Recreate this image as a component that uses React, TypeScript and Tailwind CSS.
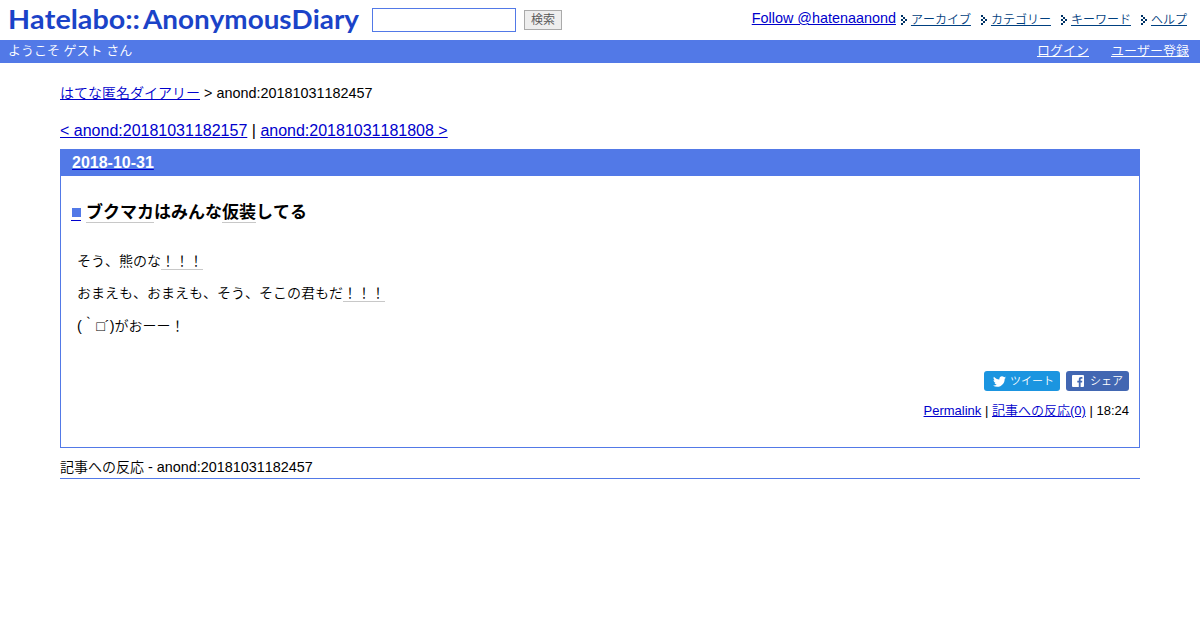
import type { ReactNode } from "react";
import { FaTwitter } from "react-icons/fa";

const menu = ["アーカイブ", "カテゴリー", "キーワード", "ヘルプ"];

function Arrow() {
  return (
    <svg width="6" height="10" viewBox="0 0 6 10" fill="#003366" shapeRendering="crispEdges" className="mr-1 mt-[15px] shrink-0">
      <path d="M0 0h2v2H0zM2 2h2v2H2zM4 4h2v2H4zM2 6h2v2H2zM0 8h2v2H0zM0 4h2v2H0z" />
    </svg>
  );
}

function Keyword({ children }: { children: ReactNode }) {
  return <span className="border-b border-[#c8c8c8]">{children}</span>;
}

function Header() {
  return (
    <header className="flex h-10 items-start">
      <svg width="352" height="40" viewBox="0 0 352 40" fill="#1b43c8" className="ml-2 shrink-0 font-['Lato','Liberation_Sans',sans-serif] font-bold">
        <text x="0" y="28.5" fontSize="27" textLength="132" lengthAdjust="spacingAndGlyphs">Hatelabo::</text>
        <text x="135" y="28.5" fontSize="27" textLength="216" lengthAdjust="spacingAndGlyphs">AnonymousDiary</text>
      </svg>
      <input type="text" aria-label="検索" className="ml-3 mt-2 h-6 w-36 border border-[#5279e7] bg-white px-1 text-sm outline-none" />
      <button className="ml-2 mt-2.5 h-5 w-[38px] border border-[#aaa] bg-[#eee] text-xs leading-[17px] text-[#555]">検索</button>
      <nav className="ml-auto mr-[13px] flex">
        <a href="#" className="mr-[5px] mt-2 text-[14.4px] leading-5 text-[#0000cc] underline">Follow @hatenaanond</a>
        <ul className="flex gap-2.5 text-xs text-[#004080]">
          {menu.map((item) => (
            <li key={item} className="flex">
              <Arrow />
              <a href="#" className="mt-3 leading-4 underline">{item}</a>
            </li>
          ))}
        </ul>
      </nav>
    </header>
  );
}

function ShareButtons() {
  return (
    <div className="flex justify-end gap-1.5 text-[11px] leading-5 text-white">
      <a href="#" className="flex h-5 w-[76px] items-center rounded-[3px] bg-[#1b95e0] pl-[9px]">
        <FaTwitter className="mr-1 size-[13px]" />
        ツイート
      </a>
      <a href="#" className="flex h-5 w-[63px] items-center rounded-[3px] bg-[#4267b2] pl-1.5">
        <svg width="12" height="12" viewBox="0 0 12 12" className="mr-1.5">
          <rect width="12" height="12" rx="1" fill="#fff" />
          <path d="M6.8 12V7.5H5.3V5.7h1.5V4.4c0-1.6.9-2.4 2.3-2.4.6 0 1.2.1 1.3.1v1.6h-.9c-.7 0-.9.4-.9.9v1.1h1.7l-.2 1.8H8.6V12z" fill="#4267b2" />
        </svg>
        シェア
      </a>
    </div>
  );
}

export default function App() {
  return (
    <div className="min-h-screen bg-white font-['Liberation_Sans','Noto_Sans_CJK_JP',sans-serif] font-[350] text-black [font-kerning:none]">
      <Header />
      <div className="flex h-[23px] justify-between bg-[#5279e7] pl-2 pr-[11px] text-[13px] leading-[22px] text-white">
        <span>ようこそ ゲスト さん</span>
        <div className="flex gap-[22px]">
          <a href="#" className="underline">ログイン</a>
          <a href="#" className="underline">ユーザー登録</a>
        </div>
      </div>

      <main className="mx-[60px] pt-5">
        <p className="h-5 text-[14.4px] leading-5">
          <a href="#" className="text-sm leading-5 text-[#0000cc] underline">はてな匿名ダイアリー</a> &gt; anond:20181031182457
        </p>
        <p className="mt-[18px] h-5 text-base leading-5">
          <a href="#" className="text-[#0000cc] underline">&lt; anond:20181031182157</a> |{" "}
          <a href="#" className="text-[#0000cc] underline">anond:20181031181808 &gt;</a>
        </p>

        <article className="mt-2 h-[299px] border border-[#5279e7]">
          <h2 className="h-[26px] bg-[#5279e7] pl-[11px] text-base font-bold leading-[25px]">
            <a href="#" className="text-white underline decoration-[#0000cc]">2018-10-31</a>
          </h2>
          <div className="px-2.5 pt-[25px]">
            <h3 className="flex h-6 text-[17px] font-bold leading-6">
              <a href="#" aria-label="permalink" className="mr-[5px] mt-[7px] h-[13px] w-2.5 border-b border-[#0000cc]">
                <span className="block size-[9px] translate-x-px bg-[#5279e7]" />
              </a>
              <span className="pt-0.5 leading-5">
                <Keyword>ブクマカ</Keyword>はみんな<Keyword>仮装</Keyword>してる
              </span>
            </h3>
            <div className="mt-[26px] pl-1.5 text-sm leading-5">
              <p>そう、熊のな<Keyword>！！！</Keyword></p>
              <p className="mt-3">おまえも、おまえも、そう、そこの君もだ<Keyword>！！！</Keyword></p>
              <p className="mt-[13px]">
                <span className="text-[14.4px] leading-5">(｀□´)</span>がおーー！
              </p>
            </div>
            <div className="mt-[35px]">
              <ShareButtons />
            </div>
            <p className="mt-2.5 text-right text-[13px] leading-5">
              <a href="#" className="text-[#0000cc] underline">Permalink</a> |{" "}
              <a href="#" className="text-[#0000cc] underline">記事への反応(0)</a> | 18:24
            </p>
          </div>
        </article>

        <p className="mt-2 h-[23px] border-b border-[#5279e7] text-[14.4px] leading-[22px]">
          <span className="text-sm leading-[22px]">記事への反応</span> - anond:20181031182457
        </p>
      </main>
    </div>
  );
}
